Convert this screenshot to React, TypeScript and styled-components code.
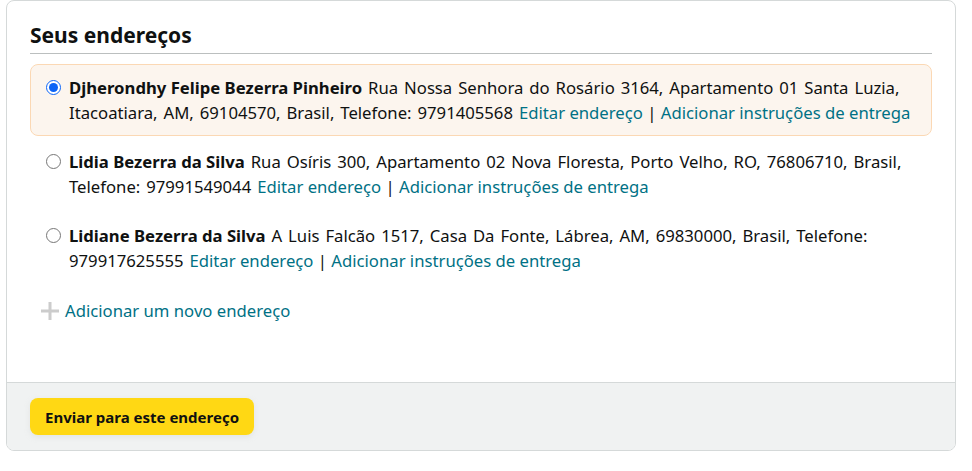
import { useState } from 'react';
import styled, { createGlobalStyle } from 'styled-components';

const GlobalStyle = createGlobalStyle`
  body {
    margin: 0;
    background: #ffffff;
    font-family: "Noto Sans", "Open Sans", Arial, sans-serif;
    color: #0f1111;
  }
`;

const Page = styled.div`
  padding: 0 16px 20px 6px;
`;

const Card = styled.div`
  border: 1px solid #d5d9d9;
  border-radius: 8px;
  overflow: hidden;
  background: #fff;
`;

const Body = styled.div`
  padding: 18px 23px 59px 23px;
`;

const Heading = styled.h2`
  margin: 0;
  font-size: 21px;
  line-height: 32px;
  font-weight: 700;
  padding-bottom: 2px;
  border-bottom: 1px solid #bbbfbf;
`;

const List = styled.div`
  display: flex;
  flex-direction: column;
  gap: 2px;
  margin-top: 10px;
`;

const Item = styled.label<{ $selected: boolean }>`
  display: flex;
  align-items: flex-start;
  gap: 8px;
  padding: 10px 6px 10px 15px;
  border-radius: 8px;
  border: 1px solid ${p => (p.$selected ? '#fbd8b4' : 'transparent')};
  background: ${p => (p.$selected ? '#fcf5ee' : 'transparent')};
  cursor: pointer;
`;

const Radio = styled.input`
  margin: 5px 0 0 0;
  width: 15px;
  height: 15px;
  flex-shrink: 0;
  accent-color: #0b63f6;
`;

const Text = styled.div`
  font-size: 16.7px;
  line-height: 25px;
  word-spacing: 1.6px;
`;

const Name = styled.b`
  font-weight: 700;
  word-spacing: 0;
`;

const Link = styled.a`
  color: #007185;
  text-decoration: none;
`;

const Actions = styled.span`
  word-spacing: 0;
`;

const AddRow = styled.div`
  display: flex;
  align-items: center;
  gap: 5px;
  margin: 14px 0 0 10px;
  font-size: 16.7px;
  line-height: 25px;
`;

const Footer = styled.div`
  background: #f0f2f2;
  border-top: 1px solid #d5d9d9;
  padding: 15px 23px 15px;
`;

const Button = styled.button`
  background: #ffd814;
  border: none;
  border-radius: 8px;
  height: 37px;
  padding: 0 15px;
  font-family: inherit;
  font-size: 15px;
  font-weight: 700;
  color: #0f1111;
  box-shadow: 0 2px 5px 0 rgba(213, 217, 217, 0.5);
  cursor: pointer;
`;

const PlusIcon = () => (
  <svg width="20" height="20" viewBox="0 0 20 20">
    <rect x="8.5" y="1" width="3" height="18" fill="#cccccc" />
    <rect x="1" y="8.5" width="18" height="3" fill="#cccccc" />
  </svg>
);

const addresses = [
  {
    name: 'Djherondhy Felipe Bezerra Pinheiro',
    address: 'Rua Nossa Senhora do Rosário 3164, Apartamento 01 Santa Luzia, Itacoatiara, AM, 69104570, Brasil, Telefone: 9791405568',
  },
  {
    name: 'Lidia Bezerra da Silva',
    address: 'Rua Osíris 300, Apartamento 02 Nova Floresta, Porto Velho, RO, 76806710, Brasil, Telefone: 97991549044',
  },
  {
    name: 'Lidiane Bezerra da Silva',
    address: 'A Luis Falcão 1517, Casa Da Fonte, Lábrea, AM, 69830000, Brasil, Telefone: 979917625555',
  },
];

export default function App() {
  const [selected, setSelected] = useState(0);

  return (
    <Page>
      <GlobalStyle />
      <Card>
        <Body>
          <Heading>Seus endereços</Heading>
          <List>
            {addresses.map((a, i) => (
              <Item key={i} $selected={selected === i}>
                <Radio
                  type="radio"
                  name="address"
                  checked={selected === i}
                  onChange={() => setSelected(i)}
                />
                <Text>
                  <Name>{a.name}</Name> {a.address}{' '}
                  <Actions>
                    <Link href="#">Editar endereço</Link> | <Link href="#">Adicionar instruções de entrega</Link>
                  </Actions>
                </Text>
              </Item>
            ))}
          </List>
          <AddRow>
            <PlusIcon />
            <Link href="#">Adicionar um novo endereço</Link>
          </AddRow>
        </Body>
        <Footer>
          <Button>Enviar para este endereço</Button>
        </Footer>
      </Card>
    </Page>
  );
}
